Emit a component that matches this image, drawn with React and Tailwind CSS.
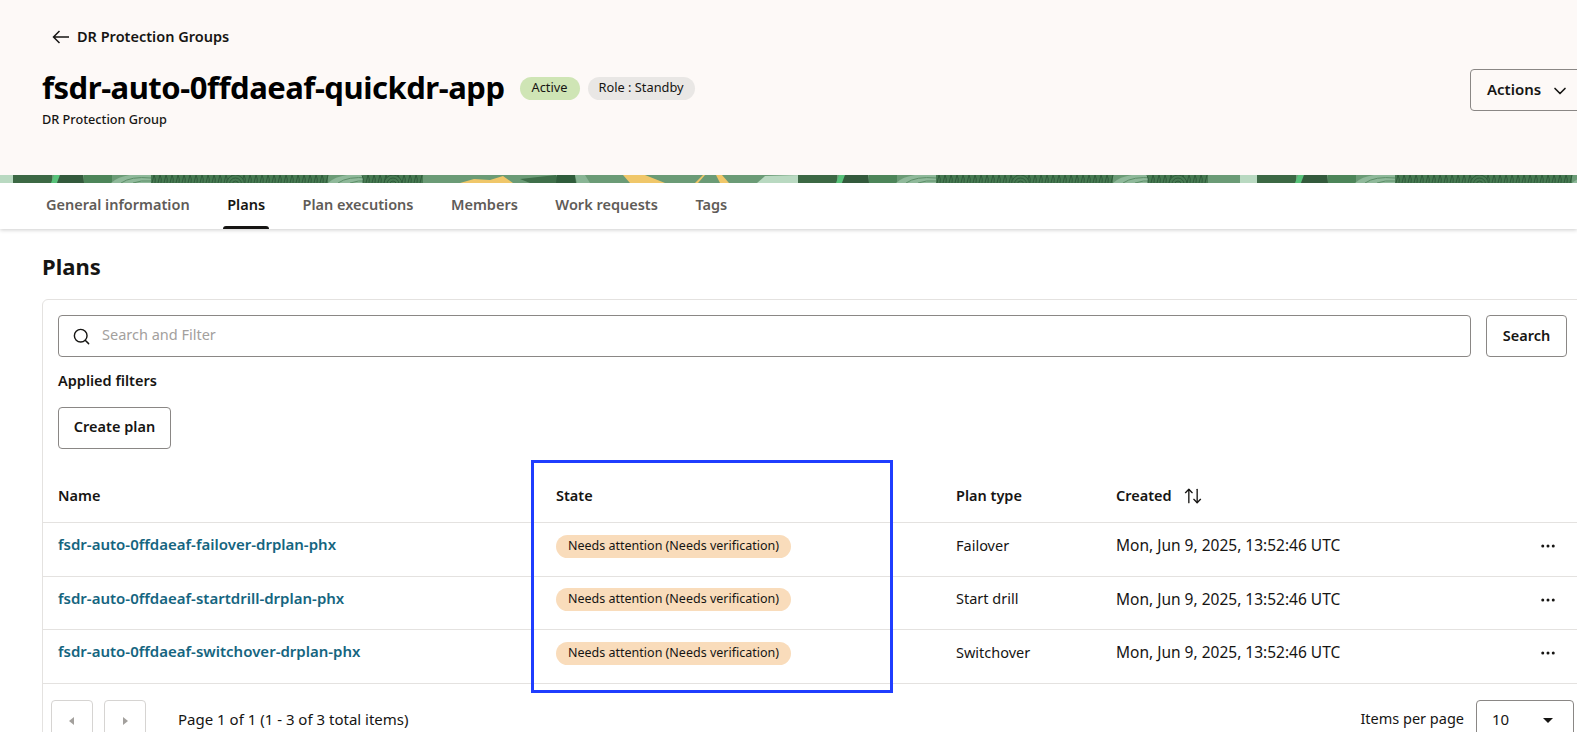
import React from "react";
import { ArrowUpDown, ChevronDown, Ellipsis, Search } from "lucide-react";

const rows = [
  { name: "fsdr-auto-0ffdaeaf-failover-drplan-phx", type: "Failover", h: "h-[54px]" },
  { name: "fsdr-auto-0ffdaeaf-startdrill-drplan-phx", type: "Start drill", h: "h-[53px]" },
  { name: "fsdr-auto-0ffdaeaf-switchover-drplan-phx", type: "Switchover", h: "h-[54px]" },
];

const tabs = ["General information", "Plans", "Plan executions", "Members", "Work requests", "Tags"];

// fingerprint texture used in the banner
const Rings = ({ x, w }) => {
  const lines = [];
  for (let i = 0; i < w; i += 3) {
    lines.push(<path key={i} d={`M${x + i} 8 q1 -4 ${i % 2 ? 2 : -1} -8`} stroke="#2f5c3b" strokeWidth="1" fill="none" />);
  }
  return (
    <g>
      <rect x={x} y="0" width={w} height="8" fill="#477a52" />
      {lines}
      <circle cx={x + w / 2} cy="9" r="9" fill="#477a52" stroke="#2f5c3b" />
      <circle cx={x + w / 2} cy="9" r="6" fill="none" stroke="#2f5c3b" />
      <circle cx={x + w / 2} cy="9" r="3" fill="none" stroke="#2f5c3b" />
    </g>
  );
};

const Leaf = ({ x }) => (
  <g>
    <path d={`M${x} 8 Q${x + 12} -3 ${x + 40} 0 L${x + 40} 8 Z`} fill="#8fb99a" />
    <path d={`M${x + 10} 8 Q${x + 20} 1 ${x + 40} 3 M${x + 22} 8 Q${x + 30} 5 ${x + 40} 6`} stroke="#5d8f69" strokeWidth="1" fill="none" />
  </g>
);

const Unit = ({ x }) => (
  <g>
    <rect x={x} y="0" width="39" height="8" fill="#3c6844" />
    <path d={`M${x + 38} 8 L${x + 41} 0 L${x + 47} 0 L${x + 44} 8 Z`} fill="#58c27a" />
    <path d={`M${x + 44} 8 L${x + 47} 0 L${x + 70} 0 L${x + 71} 8 Z`} fill="#335a3c" />
    <rect x={x + 71} y="0" width="28" height="8" fill="#4d8559" />
    <Rings x={x + 130} w={185} />
    <Leaf x={x + 98} />
    <Leaf x={x + 315} />
    <Rings x={x + 350} w={60} />
  </g>
);

const Banner = () => (
  <svg viewBox="0 0 1577 8" className="block w-full h-2" preserveAspectRatio="none">
    <rect width="1577" height="8" fill="#6b9b76" />
    <rect x="0" y="0" width="13" height="8" fill="#b9d9c1" />
    <Unit x={13} />
    <path d="M460 8 L474 4 L490 5 L503 1 L513 8 Z" fill="#f0c76a" />
    <path d="M520 4 L556 0 L560 8 L530 8 Z" fill="#3f6f4a" />
    <path d="M557 0 L575 0 L576 8 L556 8 Z" fill="#2f5c3b" />
    <path d="M575 0 L585 0 L590 8 L577 8 Z" fill="#89b595" />
    <path d="M623 0 L645 0 L665 8 L630 8 Z" fill="#f0c76a" />
    <path d="M695 8 L703 0 L705 0 L698 8 Z" fill="#f0c76a" />
    <path d="M716 0 L722 0 L729 8 L720 8 Z" fill="#f0c76a" />
    <path d="M757 8 L765 1 L800 0 L800 8 Z" fill="#b9d9c1" />
    <Unit x={798} />
    <rect x="1208" y="0" width="32" height="8" fill="#6b9b76" />
    <rect x="1240" y="0" width="17" height="8" fill="#b9d9c1" />
    <Unit x={1257} />
  </svg>
);

const Caret = ({ className, d }) => (
  <svg viewBox="0 0 10 10" className={className}>
    <path d={d} fill="currentColor" />
  </svg>
);

const App = () => {
  return (
    <div className="relative h-[732px] w-[1577px] overflow-hidden bg-white text-[#161513] font-['Noto_Sans',sans-serif]">
      {/* HEADER */}
      <div className="h-[175px] bg-[#fdf9f7] pt-[26px]">
        <div className="ml-[52px] flex h-[22px] items-center gap-[8px] text-[14.5px] font-semibold">
          <svg viewBox="0 0 17 14" className="h-[14px] w-[17px]" fill="none" stroke="currentColor" strokeWidth="1.5">
            <path d="M17 7H1.5M7.5 1L1.5 7l6 6" />
          </svg>
          <span>DR Protection Groups</span>
        </div>
        <div className="mt-[20px] flex items-start justify-between pl-[42px]">
          <div>
            <div className="flex h-[38px] items-center">
              <h1 className="text-[31px] font-bold tracking-[-0.47px] text-black">fsdr-auto-0ffdaeaf-quickdr-app</h1>
              <span className="ml-[15px] mt-[2px] flex h-[23px] w-[60px] items-center justify-center rounded-full bg-[#cfe5b5] text-[12.8px]">Active</span>
              <span className="ml-[8px] mt-[2px] flex h-[23px] w-[107px] items-center justify-center rounded-full bg-[#e9e7e5] text-[12.8px]">Role : Standby</span>
            </div>
            <p className="mt-[4px] text-[12.7px] font-medium">DR Protection Group</p>
          </div>
          <button className="mt-[1px] flex h-[42px] w-[120px] shrink-0 -mr-[13px] items-center rounded border border-[#8a8785] pb-[2px] pl-[16px] text-[15px] font-semibold">
            Actions
            <ChevronDown className="ml-[9px] mt-[4px] h-[20px] w-[20px]" strokeWidth={2} />
          </button>
        </div>
      </div>
      <Banner />

      {/* TABS */}
      <div className="flex h-[46px] gap-[37.5px] pl-[46px] shadow-[0_1px_4px_rgba(0,0,0,0.2)]">
        {tabs.map((tab) => (
          <div
            key={tab}
            className={`relative flex items-center pb-[3px] text-[14.5px] font-semibold ${tab === "Plans" ? "text-[#161513]" : "text-[#5f5c58]"}`}
          >
            {tab}
            {tab === "Plans" && <span className="absolute -left-[4px] -right-[4px] bottom-0 h-[3px] rounded-t bg-[#161513]" />}
          </div>
        ))}
      </div>

      {/* CONTENT */}
      <h2 className="ml-[42px] mt-[22px] h-[30px] text-[22px] leading-[30px] font-bold">Plans</h2>
      <div className="ml-[42px] mt-[18px] w-[1560px] rounded-t-md border border-[#e4e2e0]">
        <div className="flex items-center gap-[15px] pl-[15px] pt-[15px]">
          <div className="flex h-[42px] w-[1413px] items-center rounded border border-[#8a8785] pl-[13px]">
            <Search className="h-[19px] w-[19px]" strokeWidth={1.8} />
            <span className="ml-[11px] pb-[2px] text-[14.5px] text-[#a3a09d]">Search and Filter</span>
          </div>
          <button className="h-[42px] w-[81px] rounded border border-[#8a8785] text-[14.5px] font-semibold">Search</button>
        </div>
        <p className="ml-[15px] mt-[13px] h-[20px] text-[14.5px] leading-[20px] font-semibold">Applied filters</p>
        <button className="ml-[15px] mt-[17px] block h-[42px] w-[113px] rounded border border-[#8a8785] pb-[2px] text-[14.5px] font-semibold">Create plan</button>

        {/* TABLE */}
        <div className="grid h-[74px] grid-cols-[498px_400px_160px_441px] items-center border-b border-[#e4e2e0] pl-[15px] pt-[21px] text-[14.5px] font-semibold">
          <span>Name</span>
          <span>State</span>
          <span>Plan type</span>
          <span className="flex items-center gap-[11px]">
            Created
            <ArrowUpDown className="h-[20px] w-[20px]" strokeWidth={1.6} />
          </span>
        </div>
        {rows.map((row) => (
          <div
            key={row.name}
            className={`grid ${row.h} grid-cols-[498px_400px_160px_441px] items-center border-b border-[#e4e2e0] pb-[7px] pl-[15px] text-[14.5px]`}
          >
            <a className="mb-[3px] text-[15px] font-semibold text-[#15657f]">{row.name}</a>
            <span>
              <span className="flex h-[23px] w-[235px] items-center justify-center rounded-full bg-[#f9dcbb] text-[12.5px]">
                Needs attention (Needs verification)
              </span>
            </span>
            <span className="mb-[1px]">{row.type}</span>
            <span className="flex items-center justify-between text-[15.5px]">
              Mon, Jun 9, 2025, 13:52:46 UTC
              <Ellipsis className="h-[18px] w-[18px]" strokeWidth={2} />
            </span>
          </div>
        ))}

        {/* PAGINATION */}
        <div className="flex w-[1531px] items-start justify-between pl-[8px] pt-[16px] text-[15px]">
          <div className="flex items-center">
            <button className="flex h-[42px] w-[42px] items-center justify-center rounded border border-[#d6d4d2] text-[#a3a09d]">
              <Caret className="h-[10px] w-[10px]" d="M7 1 L7 9 L2 5 Z" />
            </button>
            <button className="ml-[11px] flex h-[42px] w-[42px] items-center justify-center rounded border border-[#d6d4d2] text-[#a3a09d]">
              <Caret className="h-[10px] w-[10px]" d="M3 1 L3 9 L8 5 Z" />
            </button>
            <span className="ml-[32px] mb-[4px]">Page 1 of 1 (1 - 3 of 3 total items)</span>
          </div>
          <div className="flex items-center gap-[12px]">
            <span className="mb-[4px] text-[14.5px]">Items per page</span>
            <div className="flex h-[42px] w-[98px] items-center justify-between rounded border border-[#8a8785] pb-[3px] pl-[15px] pr-[20px]">
              10
              <Caret className="h-[10px] w-[10px]" d="M0 3 L10 3 L5 8 Z" />
            </div>
          </div>
        </div>
      </div>

      {/* annotation drawn over the table */}
      <div className="pointer-events-none absolute left-[531px] top-[460px] h-[233px] w-[362px] border-[3px] border-[#1f3dff]" />
    </div>
  );
};

export default App;
